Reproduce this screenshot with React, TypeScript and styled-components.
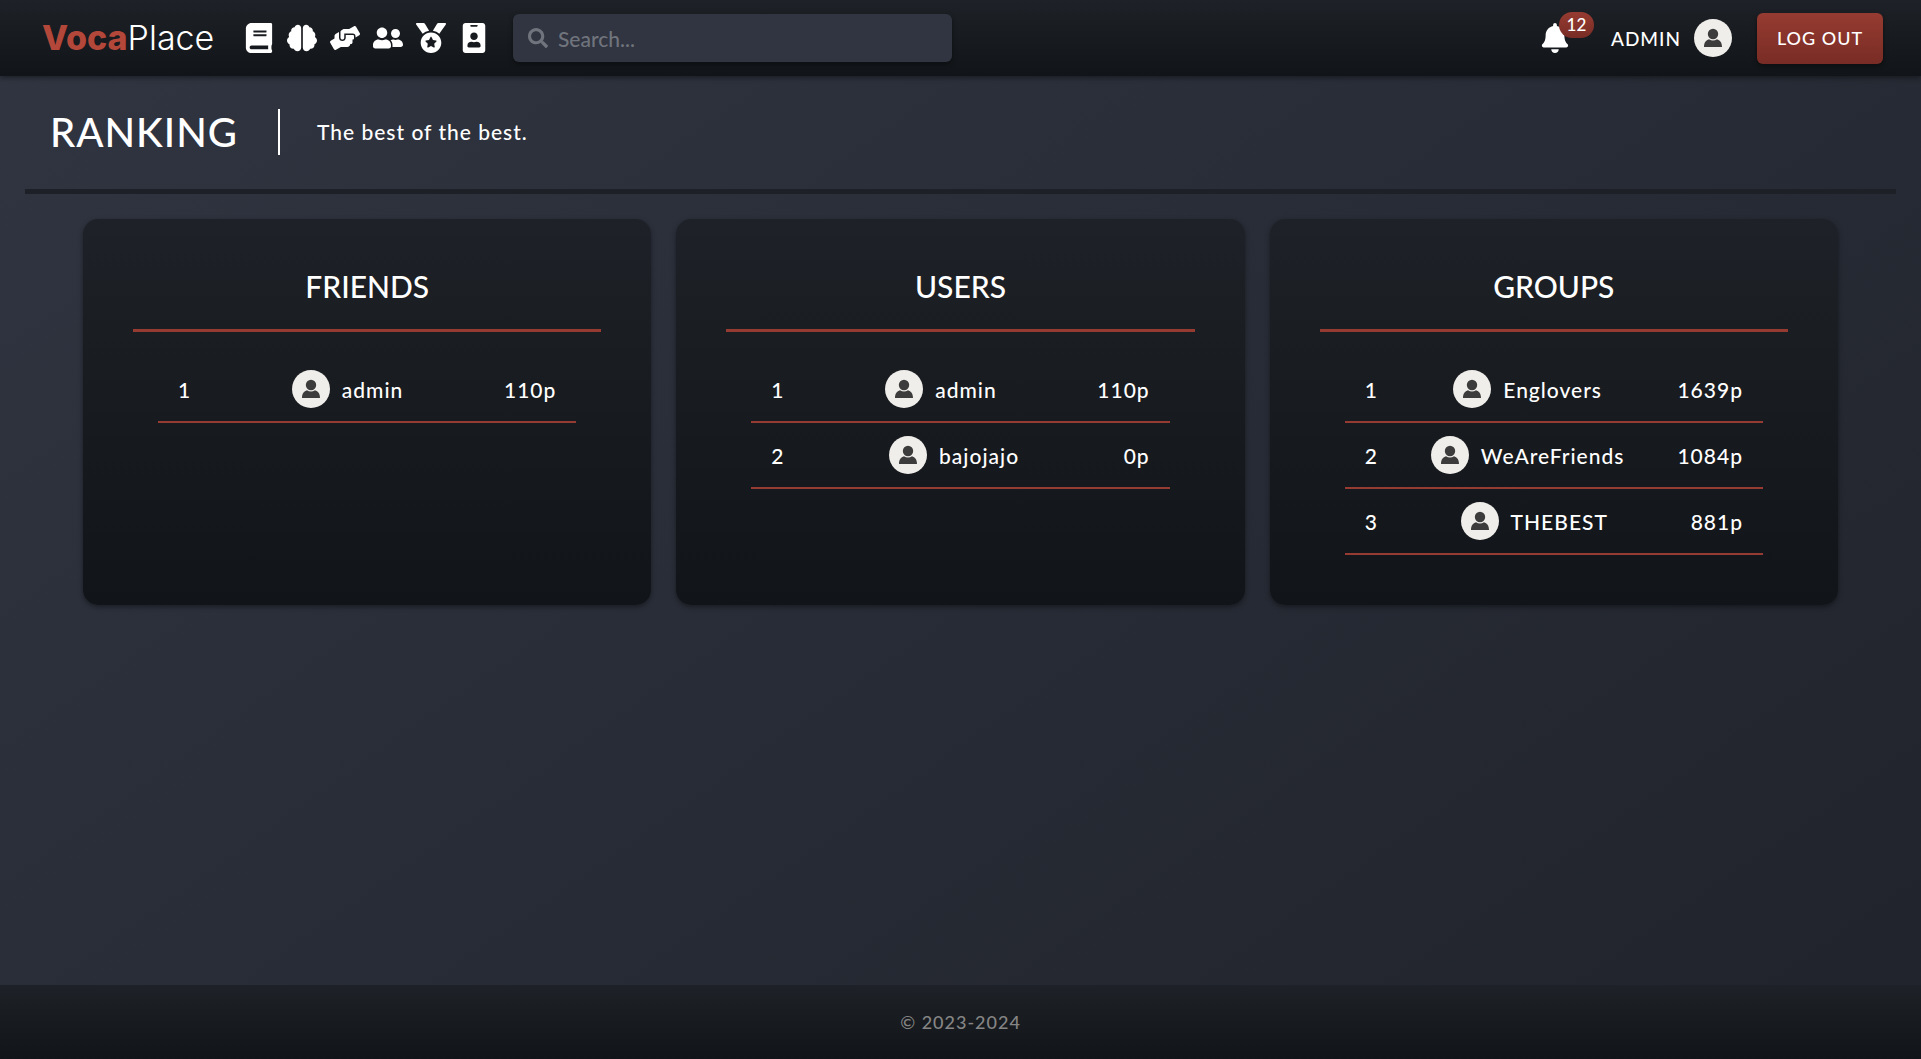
import React from "react";
import styled, { createGlobalStyle } from "styled-components";
import { FaBook, FaBrain, FaHandsHelping, FaUserFriends, FaMedal, FaIdBadge, FaBell, FaSearch } from "react-icons/fa";

const GlobalStyle = createGlobalStyle`
  *, *::before, *::after { box-sizing: border-box; }
  body {
    margin: 0;
    color: #fff;
    background: #282c35;
    font-family: Lato, "Liberation Sans", sans-serif;
    font-size: 21px;
    font-weight: 500;
    letter-spacing: 1px;
  }
  a { color: inherit; text-decoration: none; }
`;

const darkGradient = "linear-gradient(#1e2128, #1a1d21 30%, #111418)";
const redGradient = "linear-gradient(#963b31, #782c25)";
const softShadow = "0 2px 5px rgba(0, 0, 0, 0.4)";

const Page = styled.div`
  min-height: 100vh;
  display: flex;
  flex-direction: column;
  background: linear-gradient(145deg, #303541, #20232b);
`;

const TopBar = styled.header`
  display: flex;
  align-items: center;
  height: 76px;
  padding: 0 38px 0 42px;
  background: ${darkGradient};
  box-shadow: ${softShadow};
`;

const Logo = styled.a`
  width: 202px;
  font-family: Inter, "Liberation Sans", sans-serif;
  font-size: 34px;
  font-weight: 300;
  letter-spacing: 0;
  line-height: 40px;
`;

const LogoStrong = styled.span`
  font-weight: 800;
  color: #b3473a;
`;

const Nav = styled.nav`
  display: flex;
  gap: 13px;
  margin-right: 24px;
`;

const IconLink = styled.a`
  display: flex;
  justify-content: center;
  width: 30px;
  font-size: 30px;
`;

const SearchBox = styled.label`
  display: flex;
  align-items: center;
  gap: 10px;
  flex: 0 1 439px;
  height: 48px;
  padding: 0 15px;
  border-radius: 6px;
  background: #303541;
  color: #70747c;
  box-shadow: ${softShadow};
`;

const SearchInput = styled.input`
  flex: 1;
  min-width: 0;
  padding: 0;
  border: 0;
  outline: 0;
  background: none;
  color: #fff;
  font: inherit;
  &::placeholder { color: #70747c; opacity: 1; }
`;

const Account = styled.div`
  display: flex;
  align-items: center;
  margin-left: auto;
`;

const Bell = styled.button`
  position: relative;
  display: flex;
  padding: 0;
  border: 0;
  margin-right: 41px;
  background: none;
  color: #fff;
  font: inherit;
  font-size: 30px;
`;

const Count = styled.span`
  position: absolute;
  left: 19px;
  top: -11px;
  width: 35px;
  border-radius: 13px;
  background: ${redGradient};
  font-size: 17px;
  line-height: 26px;
  letter-spacing: 0;
  text-align: center;
`;

const Profile = styled.a`
  display: flex;
  align-items: center;
  gap: 13px;
  margin-right: 25px;
  font-size: 19px;
`;

const LogOut = styled.button`
  width: 126px;
  height: 51px;
  padding: 0;
  border: 0;
  border-radius: 6px;
  background: ${redGradient};
  box-shadow: ${softShadow};
  color: #fff;
  font: inherit;
  font-size: 18px;
  letter-spacing: 1px;
`;

const AvatarSvg = styled.svg`
  flex: none;
  width: 38px;
  height: 38px;
`;

const Main = styled.main`
  flex: 1;
  padding: 0 25px;
`;

const Intro = styled.div`
  display: flex;
  align-items: center;
  height: 118px;
  padding: 0 25px 2px;
  border-bottom: 5px solid #1d2027;
`;

const Title = styled.h1`
  margin: 0;
  padding-right: 40px;
  font-size: 40px;
  font-weight: 500;
  line-height: 46px;
  border-right: 2px solid #fff;
`;

const Tagline = styled.p`
  margin: 0 0 0 37px;
`;

const Boards = styled.div`
  display: grid;
  grid-template-columns: repeat(3, 1fr);
  gap: 25px;
  padding: 25px 58px;
`;

const Card = styled.section`
  padding: 50px;
  border-radius: 15px;
  background: ${darkGradient};
  box-shadow: ${softShadow};
`;

const CardTitle = styled.h2`
  margin: 0;
  padding-bottom: 26px;
  border-bottom: 3px solid #963b31;
  font-size: 30px;
  font-weight: 500;
  line-height: 34px;
  letter-spacing: 0;
  text-align: center;
`;

const List = styled.ol`
  margin: 25px 25px 0;
  padding: 0;
  list-style: none;
`;

const Row = styled.li`
  display: flex;
  align-items: center;
  justify-content: space-between;
  padding: 13px 20px;
  border-bottom: 2px solid #963b31;
`;

const Member = styled.a`
  display: flex;
  align-items: center;
  gap: 12px;
`;

const Footer = styled.footer`
  display: flex;
  align-items: center;
  justify-content: center;
  height: 74px;
  background: ${darkGradient};
  color: #858585;
  font-size: 18px;
`;

const Avatar = () => (
  <AvatarSvg viewBox="0 0 38 38" aria-hidden="true">
    <circle cx="19" cy="19" r="19" fill="#f0eeea" />
    <circle cx="19" cy="15" r="5.2" fill="#3c3c3c" />
    <path d="M10 28c0-4.500 2-7 5-7.800 2.500 1.700 5.500 1.700 8 0 3 .8 5 3.300 5 7.800z" fill="#3c3c3c" />
  </AvatarSvg>
);

const links = [
  { label: "Lessons", Icon: FaBook },
  { label: "Quizzes", Icon: FaBrain },
  { label: "Help", Icon: FaHandsHelping },
  { label: "Groups", Icon: FaUserFriends },
  { label: "Ranking", Icon: FaMedal },
  { label: "Profile", Icon: FaIdBadge },
];

const boards = [
  { title: "FRIENDS", rows: [["admin", 110]] },
  { title: "USERS", rows: [["admin", 110], ["bajojajo", 0]] },
  { title: "GROUPS", rows: [["Englovers", 1639], ["WeAreFriends", 1084], ["THEBEST", 881]] },
];

export default function App() {
  return (
    <Page>
      <GlobalStyle />
      <TopBar>
        <Logo href="#"><LogoStrong>Voca</LogoStrong>Place</Logo>
        <Nav>
          {links.map(({ label, Icon }) => (
            <IconLink key={label} href="#" aria-label={label}><Icon /></IconLink>
          ))}
        </Nav>
        <SearchBox>
          <FaSearch size={20} aria-hidden="true" />
          <SearchInput type="search" placeholder="Search..." aria-label="Search" />
        </SearchBox>
        <Account>
          <Bell type="button" aria-label="Notifications"><FaBell /><Count>12</Count></Bell>
          <Profile href="#">ADMIN<Avatar /></Profile>
          <LogOut type="button">LOG OUT</LogOut>
        </Account>
      </TopBar>
      <Main>
        <Intro>
          <Title>RANKING</Title>
          <Tagline>The best of the best.</Tagline>
        </Intro>
        <Boards>
          {boards.map((board) => (
            <Card key={board.title}>
              <CardTitle>{board.title}</CardTitle>
              <List>
                {board.rows.map(([name, points], i) => (
                  <Row key={name}>
                    <span>{i + 1}</span>
                    <Member href="#"><Avatar />{name}</Member>
                    <span>{points}p</span>
                  </Row>
                ))}
              </List>
            </Card>
          ))}
        </Boards>
      </Main>
      <Footer>© 2023-2024</Footer>
    </Page>
  );
}
